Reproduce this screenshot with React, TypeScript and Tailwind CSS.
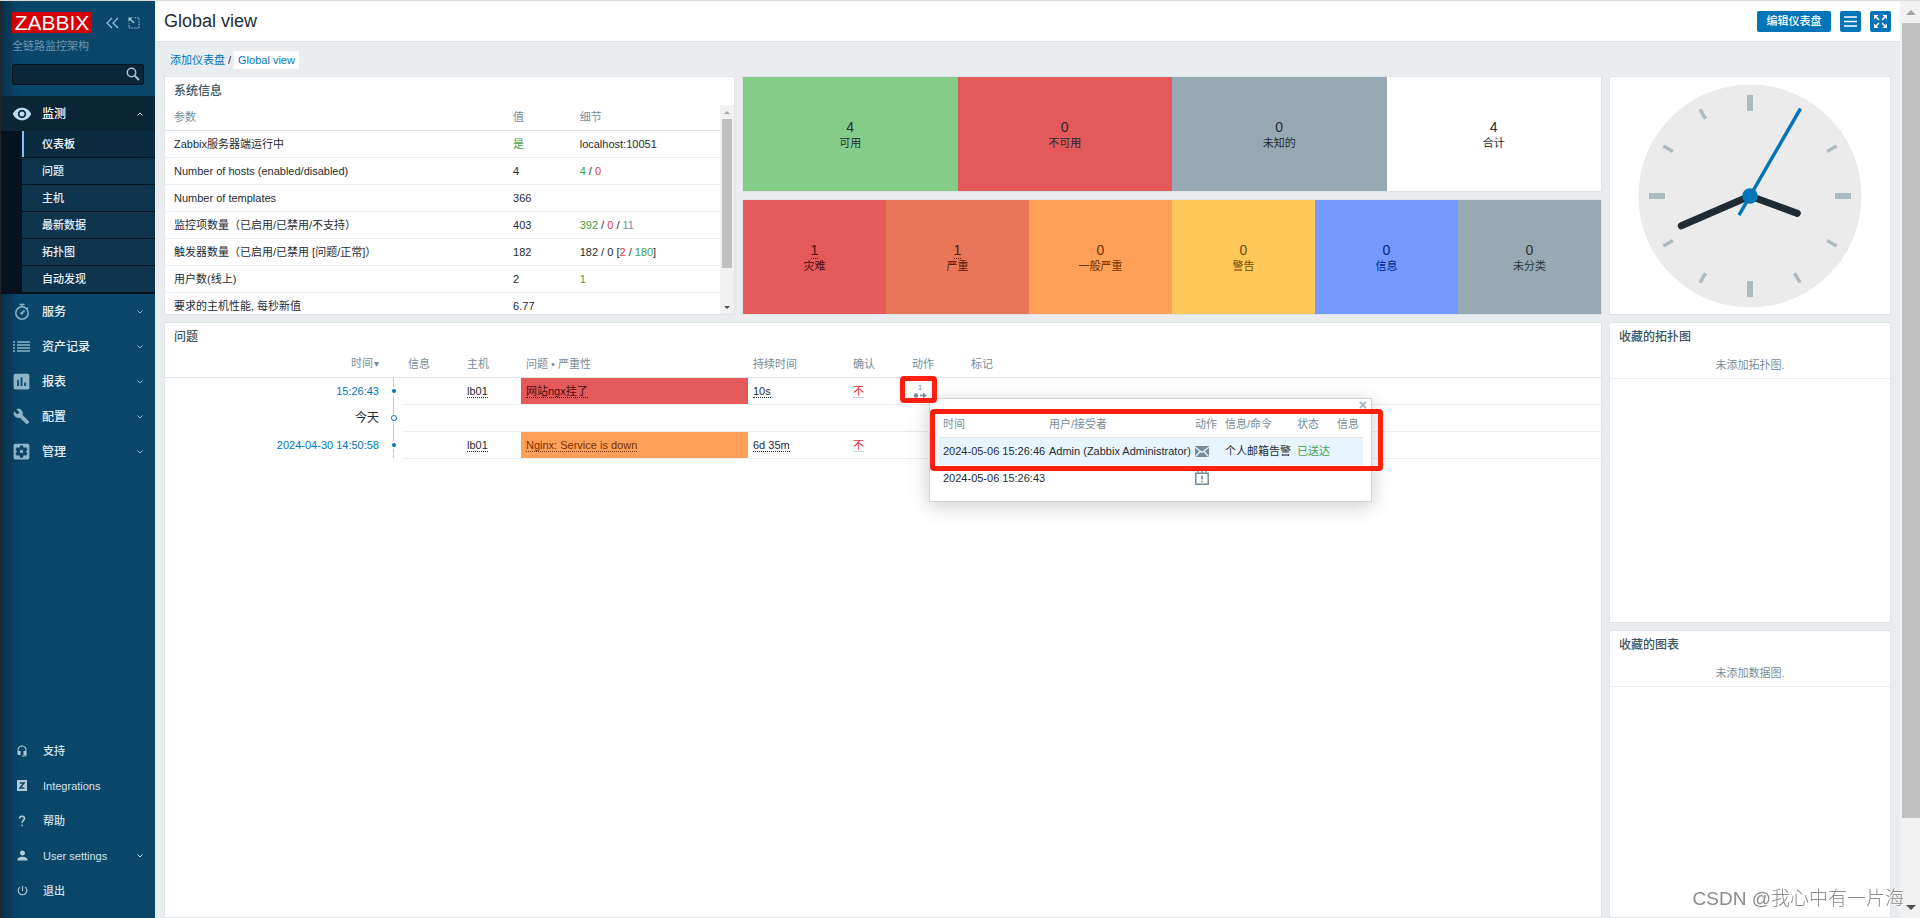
import type { ReactNode } from 'react';
import {
    MdBuild,
    MdHeadsetMic,
    MdInsertChart,
    MdPerson,
    MdPowerSettingsNew,
    MdSettingsApplications,
    MdVisibility,
} from 'react-icons/md';

function Chevron({ up = false }: { up?: boolean }) {
    return (
        <svg width="6" height="6" viewBox="0 0 6 6" fill="none" stroke="currentColor">
            <path d={up ? 'M0.5 4.5 3 2 5.5 4.5' : 'M0.5 1.5 3 4 5.5 1.5'} />
        </svg>
    );
}

function TimerIcon() {
    return (
        <svg width="16" height="18" viewBox="0 0 16 18" fill="none" stroke="currentColor">
            <circle cx="8" cy="10" r="6.2" strokeWidth="1.5" />
            <path d="M5.5 1.5h5M8 1.5V4M13 4.5l1 1" strokeWidth="1.5" />
            <path d="M8 10l2.6-2.6" strokeWidth="1.5" />
            <circle cx="7.8" cy="10.2" r="1.4" fill="currentColor" stroke="none" />
        </svg>
    );
}

function ListIcon() {
    return (
        <svg width="17" height="11" viewBox="0 0 17 11" stroke="currentColor" strokeWidth="1.3">
            <path d="M0 1h2M0 4h2M0 7h2M0 10h2M4 1h13M4 4h13M4 7h13M4 10h13" />
        </svg>
    );
}

const subItems = ['仪表板', '问题', '主机', '最新数据', '拓扑图', '自动发现'];

const menuItems: { label: string; icon: ReactNode }[] = [
    { label: '服务', icon: <TimerIcon /> },
    { label: '资产记录', icon: <ListIcon /> },
    { label: '报表', icon: <MdInsertChart size={21} /> },
    { label: '配置', icon: <MdBuild size={17} /> },
    { label: '管理', icon: <MdSettingsApplications size={21} /> },
];

const bottomItems: { label: string; icon: ReactNode; expandable?: boolean }[] = [
    { label: '支持', icon: <MdHeadsetMic size={12} /> },
    {
        label: 'Integrations',
        icon: (
            <svg width="10" height="11" viewBox="0 0 10 11">
                <path d="M0 0h10v11H0z" fill="currentColor" />
                <path d="M2.8 3h4.2L3 8h4.4" fill="none" stroke="#0a466a" strokeWidth="1.5" />
            </svg>
        ),
    },
    {
        label: '帮助',
        icon: (
            <svg width="8" height="12" viewBox="0 0 8 12" fill="none" stroke="currentColor" strokeWidth="1.5">
                <path d="M1.5 3.5C1.5 0.4 6.5 0.4 6.5 3.5 6.5 5.4 4 5.4 4 8M4 9.7v1.6" />
            </svg>
        ),
    },
    { label: 'User settings', icon: <MdPerson size={15} />, expandable: true },
    { label: '退出', icon: <MdPowerSettingsNew size={13} /> },
];

function Sidebar() {
    return (
        <aside className="flex w-[155px] shrink-0 flex-col border-l border-[#222426] bg-linear-to-r from-[#07304a] to-[#0a466a] to-12% text-[#e6f0f6]">
            <div className="flex items-center pt-[11px] pl-[11px]">
                <a href="#" className="flex h-[21px] w-[80px] items-center justify-center bg-[#d40000] text-[21px] leading-none text-white">
                    ZABBIX
                </a>
                <button aria-label="收起" className="ml-[14px] text-[#9cc3d9]">
                    <svg width="13" height="12" viewBox="0 0 13 12" fill="none" stroke="currentColor" strokeWidth="1.2">
                        <path d="M6 1 1 6l5 5M12 1 7 6l5 5" />
                    </svg>
                </button>
                <button aria-label="隐藏" className="ml-[9px] text-[#9cc3d9]">
                    <svg width="12" height="12" viewBox="0 0 12 12" fill="none" stroke="currentColor">
                        <path d="M6.5 0.8H11V11H1V6.5" strokeDasharray="1.6 1" />
                        <path d="M6 6 2 2" strokeWidth="1.4" />
                        <path d="M0.5 0.5h4.2L0.5 4.7z" fill="currentColor" stroke="none" />
                    </svg>
                </button>
            </div>
            <div className="mt-[4px] pl-[11px] text-[11px] leading-[18px] text-[#6f93a9]">全链路监控架构</div>
            <form className="relative mt-[9px] mr-[11px] ml-[11px]">
                <input
                    type="text"
                    aria-label="搜索"
                    className="block h-[21px] w-full rounded-[2px] border border-[#04141f] bg-[#0a2639] px-2 text-[11px] outline-none"
                />
                <svg className="absolute top-[3px] right-[4px] text-[#a9c3d2]" width="14" height="14" viewBox="0 0 14 14" fill="none" stroke="currentColor">
                    <circle cx="5.5" cy="5.5" r="4.2" strokeWidth="1.5" />
                    <path d="M8.6 8.6 13 13" strokeWidth="1.8" />
                </svg>
            </form>

            <nav className="mt-[11px] text-[12px]">
                <a href="#" className="flex h-[35px] items-center bg-[#0a2536] pr-[12px] pl-[10px] font-medium text-white">
                    <span className="flex w-[21px] justify-center text-[#b9dcf2]">
                        <MdVisibility size={20} />
                    </span>
                    <span className="ml-[10px] flex-1">监测</span>
                    <Chevron up />
                </a>
                <ul className="flex flex-col gap-px bg-[#04131d] pb-[2px] pl-[21px] text-[11px] font-medium">
                    {subItems.map((item, i) => (
                        <li key={item}>
                            <a
                                href="#"
                                className={
                                    i === 0
                                        ? 'flex h-[26px] items-center border-l-2 border-[#7cc4f5] bg-[#0a2b40] pl-[18px] text-white'
                                        : 'flex h-[26px] items-center bg-[#0f344e] pl-[20px]'
                                }
                            >
                                {item}
                            </a>
                        </li>
                    ))}
                </ul>
                {menuItems.map((item) => (
                    <a key={item.label} href="#" className="flex h-[35px] items-center pr-[12px] pl-[10px] font-medium">
                        <span className="flex w-[21px] justify-center text-[#8fb4c9]">{item.icon}</span>
                        <span className="ml-[10px] flex-1">{item.label}</span>
                        <span className="text-[#9dbccd]"><Chevron /></span>
                    </a>
                ))}
            </nav>

            <nav className="mt-auto mb-[10px] text-[11px] text-[#d3e2eb]">
                {bottomItems.map((item) => (
                    <a key={item.label} href="#" className="flex h-[35px] items-center pr-[12px] pl-[10px] font-medium">
                        <span className="flex w-[22px] justify-center text-[#b3cad8]">{item.icon}</span>
                        <span className="ml-[10px] flex-1">{item.label}</span>
                        {item.expandable && <Chevron />}
                    </a>
                ))}
            </nav>
        </aside>
    );
}

function Widget({ title, className = '', children }: { title?: string; className?: string; children: ReactNode }) {
    return (
        <section className={`flex min-h-0 flex-col border border-[#dfe4e7] bg-white ${className}`}>
            {title && (
                <h4 className="flex h-[28px] shrink-0 items-center pl-[9px] text-[12px] font-medium text-[#3c5563]">{title}</h4>
            )}
            {children}
        </section>
    );
}

const G = ({ children }: { children: ReactNode }) => <span className="text-[#429e47]">{children}</span>;
const R = ({ children }: { children: ReactNode }) => <span className="text-[#e33734]">{children}</span>;

const systemRows: [string, ReactNode, ReactNode][] = [
    ['Zabbix服务器端运行中', <G>是</G>, 'localhost:10051'],
    ['Number of hosts (enabled/disabled)', '4', <><G>4</G> / <R>0</R></>],
    ['Number of templates', '366', ''],
    ['监控项数量（已启用/已禁用/不支持）', '403', <><G>392</G> / <R>0</R> / <span className="text-[#768d99]">11</span></>],
    ['触发器数量（已启用/已禁用 [问题/正常]）', '182', <>182 / 0 [<R>2</R> / <G>180</G>]</>],
    ['用户数(线上)', '2', <G>1</G>],
    ['要求的主机性能, 每秒新值', '6.77', ''],
];

function SystemInfo() {
    return (
        <Widget title="系统信息" className="row-span-2">
            <div className="flex min-h-0 flex-1 overflow-hidden">
                <div className="min-w-0 flex-1">
                    <table className="w-full table-fixed text-left leading-[12px]">
                        <colgroup>
                            <col className="w-[62%]" />
                            <col className="w-[12%]" />
                            <col />
                        </colgroup>
                        <thead>
                            <tr className="h-[25px] border-b border-[#dfe4e7] text-[#768d99]">
                                <th className="pl-[9px] font-normal">参数</th>
                                <th className="pl-[4px] font-normal">值</th>
                                <th className="pl-[4px] font-normal">细节</th>
                            </tr>
                        </thead>
                        <tbody>
                            {systemRows.map(([name, value, details]) => (
                                <tr key={name} className="h-[27px] border-b border-[#ebeef0] last:border-b-0">
                                    <td className="pl-[9px]">{name}</td>
                                    <td className="pl-[4px]">{value}</td>
                                    <td className="pl-[4px]">{details}</td>
                                </tr>
                            ))}
                        </tbody>
                    </table>
                </div>
                <div className="flex w-[14px] flex-col items-center bg-[#f1f1f1]">
                    <svg width="14" height="14" viewBox="0 0 14 14"><path d="M7 6l3 3H4z" fill="#a3a3a3" /></svg>
                    <div className="w-[10px] flex-1 bg-[#c1c1c1]" />
                    <div className="h-[32px]" />
                    <svg width="14" height="14" viewBox="0 0 14 14"><path d="M7 9L4 6h6z" fill="#505050" /></svg>
                </div>
            </div>
        </Widget>
    );
}

const hostTiles = [
    { count: 4, label: '可用', color: 'bg-[#86cc89]' },
    { count: 0, label: '不可用', color: 'bg-[#e45959]' },
    { count: 0, label: '未知的', color: 'bg-[#97aab3]' },
    { count: 4, label: '合计', color: 'bg-white' },
];

const severityTiles = [
    { count: 1, label: '灾难', color: 'bg-[#e45959] text-[#4b0c0c]' },
    { count: 1, label: '严重', color: 'bg-[#e97659] text-[#52190b]' },
    { count: 0, label: '一般严重', color: 'bg-[#ffa059] text-[#733100]' },
    { count: 0, label: '警告', color: 'bg-[#ffc859] text-[#734d00]' },
    { count: 0, label: '信息', color: 'bg-[#7499ff] text-[#00268e]' },
    { count: 0, label: '未分类', color: 'bg-[#97aab3] text-[#2a353a]' },
];

function Tiles({ tiles, underline = false }: { tiles: typeof hostTiles; underline?: boolean }) {
    return (
        <Widget>
            <div className="flex flex-1">
                {tiles.map((tile) => (
                    <div key={tile.label} className={`flex flex-1 flex-col items-center justify-center ${tile.color}`}>
                        <span
                            className={
                                underline && tile.count > 0
                                    ? 'border-b border-dotted border-current text-[14px] leading-[16px]'
                                    : 'border-b border-transparent text-[14px] leading-[16px]'
                            }
                        >
                            {tile.count}
                        </span>
                        <span className="leading-[14px]">{tile.label}</span>
                    </div>
                ))}
            </div>
        </Widget>
    );
}

function Clock() {
    return (
        <Widget className="row-span-2 items-center justify-center">
            <svg width="224" height="224" viewBox="-112 -112 224 224">
                <circle r="111.5" fill="#ebebeb" />
                {Array.from({ length: 12 }, (_, i) => (
                    <line
                        key={i}
                        y1={i % 3 === 0 ? -101 : -100}
                        y2={i % 3 === 0 ? -85 : -89}
                        stroke="#acbbc2"
                        strokeWidth={i % 3 === 0 ? 6 : 3.5}
                        transform={`rotate(${i * 30})`}
                    />
                ))}
                <path d="M0 0 47.3 17.4M0 0-68.7 29.8" stroke="#1f2c33" strokeWidth="7" strokeLinecap="round" />
                <line y1="22" y2="-101" stroke="#0275b8" strokeWidth="3.4" transform="rotate(30)" />
                <circle r="7.8" fill="#0275b8" />
            </svg>
        </Widget>
    );
}

function ActionsPopup() {
    return (
        <div className="absolute top-[20px] left-[22px] z-10 h-[104px] w-[443px] border border-[#ccd5d9] bg-white px-[8px] shadow-[0_4px_20px_rgba(0,0,0,0.2)]">
            <div className="-mr-[4px] flex h-[13px] justify-end">
                <button aria-label="关闭" className="text-[#aab8bf]">
                    <svg width="8" height="8" viewBox="0 0 8 8" stroke="currentColor" strokeWidth="2"><path d="M1 1l6 6M7 1 1 7" /></svg>
                </button>
            </div>
            <table className="w-full table-fixed text-left">
                <colgroup>
                    <col className="w-[106px]" />
                    <col className="w-[146px]" />
                    <col className="w-[30px]" />
                    <col className="w-[72px]" />
                    <col className="w-[40px]" />
                    <col />
                </colgroup>
                <thead>
                    <tr className="h-[26px] border-b border-[#dfe4e7] whitespace-nowrap text-[#768d99]">
                        {['时间', '用户/接受者', '动作', '信息/命令', '状态', '信息'].map((h, i) => (
                            <th key={i} className="pl-[5px] font-normal">{h}</th>
                        ))}
                    </tr>
                </thead>
                <tbody>
                    <tr className="h-[27px] bg-[#e8f5ff] whitespace-nowrap">
                        <td className="pl-[5px]">2024-05-06 15:26:46</td>
                        <td className="pl-[5px]">Admin (Zabbix Administrator)</td>
                        <td className="pl-[5px]">
                            <svg width="14" height="11" viewBox="0 0 14 11">
                                <path d="M0 0h14v11H0z" fill="#768d99" />
                                <path d="M0 1 7 6.5 14 1M0.5 10.5 5 5.5M13.5 10.5 9 5.5" fill="none" stroke="#e8f5ff" strokeWidth="1.3" />
                            </svg>
                        </td>
                        <td className="pl-[5px]">个人邮箱告警</td>
                        <td className="pl-[5px] text-[#429e47]">已送达</td>
                        <td />
                    </tr>
                    <tr className="h-[27px] whitespace-nowrap">
                        <td className="pl-[5px]">2024-05-06 15:26:43</td>
                        <td />
                        <td className="pl-[5px]">
                            <svg width="14" height="14" viewBox="0 0 14 14" fill="none" stroke="#768d99">
                                <path d="M0.8 2.2h12.4v11H0.8z" strokeWidth="1.5" />
                                <path d="M3 0v3M7 0v3M11 0v3" strokeWidth="1.3" />
                                <path d="M7 4.8v3.8M7 9.7v1.6" strokeWidth="1.7" />
                            </svg>
                        </td>
                        <td colSpan={3} />
                    </tr>
                </tbody>
            </table>
            <div className="pointer-events-none absolute top-[10px] left-0 h-[62px] w-[453px] rounded-[4px] border-[5px] border-[#ff1f10]" />
        </div>
    );
}

function TimelineDot({ open = false }: { open?: boolean }) {
    return (
        <div className="flex h-full flex-col items-center">
            <div className="w-px flex-1 bg-[#a8d4ec]" />
            <div
                className={
                    open
                        ? 'my-px size-[6px] rounded-full border border-[#0275b8] bg-white'
                        : 'my-[2px] size-[4px] rounded-full bg-[#0275b8]'
                }
            />
            <div className="w-px flex-1 bg-[#a8d4ec]" />
        </div>
    );
}

const dotted = 'border-b border-dotted border-current';

const headCell = 'pl-[5px] font-normal';
const bodyCell = 'border-b border-[#ebeef0] pl-[5px]';

function Problems() {
    return (
        <Widget title="问题" className="col-span-2 row-span-2">
            <table className="w-full table-fixed text-left">
                <colgroup>
                    <col className="w-[219px]" />
                    <col className="w-[19px]" />
                    <col className="w-[59px]" />
                    <col className="w-[59px]" />
                    <col className="w-[227px]" />
                    <col className="w-[100px]" />
                    <col className="w-[59px]" />
                    <col className="w-[59px]" />
                    <col />
                </colgroup>
                <thead>
                    <tr className="h-[26px] border-b border-[#dfe4e7] text-[#768d99]">
                        <th className="pr-[5px] text-right font-normal">
                            <a href="#">时间<span className="ml-px text-[10px]">▾</span></a>
                        </th>
                        <th />
                        <th className={headCell}>信息</th>
                        <th className={headCell}>主机</th>
                        <th className={headCell}>问题 • 严重性</th>
                        <th className={headCell}>持续时间</th>
                        <th className={headCell}>确认</th>
                        <th className={headCell}>动作</th>
                        <th className={headCell}>标记</th>
                    </tr>
                </thead>
                <tbody>
                    <tr className="h-[27px]">
                        <td className="pr-[5px] text-right text-[#0275b8]"><a href="#">15:26:43</a></td>
                        <td className="h-[27px]"><TimelineDot /></td>
                        <td className={bodyCell} />
                        <td className={bodyCell}><a href="#" className={dotted}>lb01</a></td>
                        <td className={`${bodyCell} bg-[#e45959] text-[#4b0c0c]`}><a href="#" className={dotted}>网站ngx挂了</a></td>
                        <td className={bodyCell}><a href="#" className={dotted}>10s</a></td>
                        <td className={bodyCell}><a href="#" className="border-b border-[#c9d3d8] text-[#e33734]">不</a></td>
                        <td className={bodyCell}>
                            <div className="relative -ml-[5px] h-[26px]">
                                <button aria-label="动作" className="flex w-[26px] flex-col items-center pt-[6px] text-[8px] leading-[8px] text-[#768d99]">
                                    1
                                    <svg className="mt-px" width="14" height="5" viewBox="0 0 14 5" fill="currentColor">
                                        <circle cx="3" cy="2.5" r="2.2" />
                                        <path d="M7 1.7h3V0l4 2.5L10 5V3.3H7z" />
                                    </svg>
                                </button>
                                <div className="pointer-events-none absolute -top-[2px] -left-[7px] z-20 h-[27px] w-[37px] rounded-[4px] border-[5px] border-[#ff1f10]" />
                                <ActionsPopup />
                            </div>
                        </td>
                        <td className={bodyCell} />
                    </tr>
                    <tr className="h-[27px]">
                        <td className="pr-[5px] text-right text-[12px]">今天</td>
                        <td className="h-[27px]"><TimelineDot open /></td>
                        <td colSpan={7} className={bodyCell} />
                    </tr>
                    <tr className="h-[27px]">
                        <td className="pr-[5px] text-right text-[#0275b8]"><a href="#">2024-04-30 14:50:58</a></td>
                        <td className="h-[27px]"><TimelineDot /></td>
                        <td className={bodyCell} />
                        <td className={bodyCell}><a href="#" className={dotted}>lb01</a></td>
                        <td className={`${bodyCell} bg-[#ffa059] text-[#733100]`}><a href="#" className={dotted}>Nginx: Service is down</a></td>
                        <td className={bodyCell}><a href="#" className={dotted}>6d 35m</a></td>
                        <td className={bodyCell}><a href="#" className="border-b border-[#c9d3d8] text-[#e33734]">不</a></td>
                        <td className={bodyCell} />
                        <td className={bodyCell} />
                    </tr>
                </tbody>
            </table>
        </Widget>
    );
}

function Favorites({ title, text }: { title: string; text: string }) {
    return (
        <Widget title={title}>
            <p className="flex h-[28px] items-center justify-center border-b border-[#ebeef0] text-[#768d99]">{text}</p>
        </Widget>
    );
}

export default function App() {
    return (
        <div className="flex h-screen overflow-hidden border-t border-[#dcdcdc] bg-[#e9edf0] font-['Liberation_Sans','Noto_Sans_CJK_SC',sans-serif] text-[11px] leading-[14px] text-[#1f2c33]">
            <Sidebar />

            <main className="flex min-w-0 flex-1 flex-col">
                <header className="flex h-[41px] shrink-0 items-center border-b border-[#dfe4e7] bg-white pr-[9px] pl-[9px]">
                    <h1 className="flex-1 text-[18px] leading-[24px]">Global view</h1>
                    <button className="h-[21px] w-[74px] rounded-[2px] bg-[#0275b8] font-medium text-white">编辑仪表盘</button>
                    <button aria-label="菜单" className="ml-[9px] flex size-[21px] items-center justify-center rounded-[2px] bg-[#0275b8] text-white">
                        <svg width="13" height="11" viewBox="0 0 13 11" stroke="currentColor" strokeWidth="1.3">
                            <path d="M0 1h13M0 5.5h13M0 10h13" />
                        </svg>
                    </button>
                    <button aria-label="全屏" className="ml-[9px] flex size-[21px] items-center justify-center rounded-[2px] bg-[#0275b8] text-white">
                        <svg width="13" height="13" viewBox="0 0 13 13" fill="currentColor" stroke="currentColor">
                            <path d="M2 2l3 3M11 2 8 5M2 11l3-3M11 11 8 8" strokeWidth="1.6" />
                            <path d="M0 0h4.5L0 4.5zM13 0v4.5L8.5 0zM0 13V8.5L4.5 13zM13 13H8.5L13 8.5z" stroke="none" />
                        </svg>
                    </button>
                </header>

                <nav className="flex shrink-0 items-center pt-[9px] pb-[7px] pl-[15px] text-[#0275b8]">
                    <a href="#">添加仪表盘</a>
                    <span className="mx-[3px] text-[#1f2c33]">/</span>
                    <a href="#" className="flex h-[18px] items-center bg-white px-[4px]">Global view</a>
                </nav>

                <div className="grid min-h-0 flex-1 grid-cols-[571fr_860fr_282fr] grid-rows-[116px_116px_301px_1fr] gap-[7px] px-[9px]">
                    <SystemInfo />
                    <Tiles tiles={hostTiles} />
                    <Clock />
                    <Tiles tiles={severityTiles} underline />
                    <Problems />
                    <Favorites title="收藏的拓扑图" text="未添加拓扑图." />
                    <Favorites title="收藏的图表" text="未添加数据图." />
                </div>
            </main>

            <div className="flex w-[20px] shrink-0 flex-col bg-[#f1f1f1] pl-[2px]">
                <svg width="18" height="22" viewBox="0 0 18 22"><path d="M9 9l5 5H4z" fill="#a3a3a3" /></svg>
                <div className="flex-1 bg-[#c1c1c1]" />
                <div className="h-[78px]" />
                <svg width="18" height="22" viewBox="0 0 18 22"><path d="M9 14L4 9h10z" fill="#505050" /></svg>
            </div>

            <div className="pointer-events-none fixed right-[16px] bottom-[6px] text-[19px] leading-[26px] font-light text-[#8c8c8c] [text-shadow:1px_1px_0_#ffffff]">
                CSDN @我心中有一片海
            </div>
        </div>
    );
}
